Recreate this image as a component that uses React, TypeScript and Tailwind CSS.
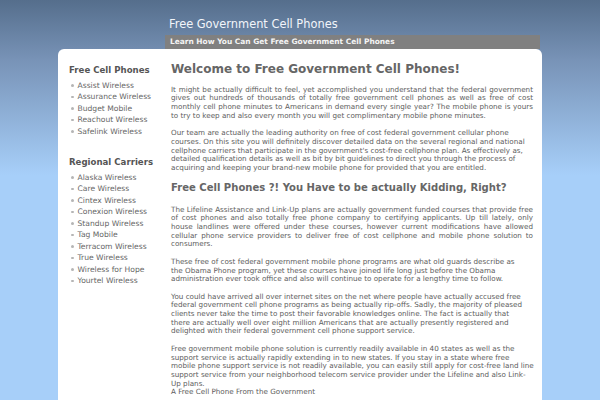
const freePhones = ['Assist Wireless', 'Assurance Wireless', 'Budget Mobile', 'Reachout Wireless', 'Safelink Wireless'];

const regional = [
  'Alaska Wireless',
  'Care Wireless',
  'Cintex Wireless',
  'Conexion Wireless',
  'Standup Wireless',
  'Tag Mobile',
  'Terracom Wireless',
  'True Wireless',
  'Wireless for Hope',
  'Yourtel Wireless',
];

const teamLines = [
  'Our team are actually the leading authority on free of cost federal government cellular phone',
  'courses. On this site you will definitely discover detailed data on the several regional and national',
  "cellphone carriers that participate in the government's cost-free cellphone plan. As effectively as,",
  'detailed qualification details as well as bit by bit guidelines to direct you through the process of',
  'acquiring and keeping your brand-new mobile phone for provided that you are entitled.',
];

const obamaLines = [
  'These free of cost federal government mobile phone programs are what old guards describe as',
  'the Obama Phone program, yet these courses have joined life long just before the Obama',
  'administration ever took office and also will continue to operate for a lengthy time to follow.',
];

const netLines = [
  'You could have arrived all over internet sites on the net where people have actually accused free',
  'federal government cell phone programs as being actually rip-offs. Sadly, the majority of pleased',
  'clients never take the time to post their favorable knowledges online. The fact is actually that',
  'there are actually well over eight million Americans that are actually presently registered and',
  'delighted with their federal government cell phone support service.',
];

const stateLines = [
  'Free government mobile phone solution is currently readily available in 40 states as well as the',
  'support service is actually rapidly extending in to new states. If you stay in a state where free',
  'mobile phone support service is not readily available, you can easily still apply for cost-free land line',
  'support service from your neighborhood telecom service provider under the Lifeline and also Link-',
  'Up plans.',
  'A Free Cell Phone From the Government',
];

function SideList({ title, items, first }: { title: string; items: string[]; first?: boolean }) {
  return (
    <div className={first ? 'pt-[16px]' : 'pt-[19.7px]'}>
      <h3 className="text-[8.6px] leading-[11px] font-bold text-[#555] mb-[3.8px]">{title}</h3>
      <ul>
        {items.map((item) => (
          <li key={item} className="flex items-center h-[11.5px] pl-[2px]">
            <span className="w-[2.5px] h-[2.5px] rounded-full bg-[#b5b5b5] mr-[4px] shrink-0" />
            <a href="#" className="text-[7.6px] text-[#666] whitespace-nowrap">
              {item}
            </a>
          </li>
        ))}
      </ul>
    </div>
  );
}

function Lines({ lines, last }: { lines: string[]; last?: boolean }) {
  return (
    <p className={last ? '' : 'mb-[8.7px]'}>
      {lines.map((line, i) => (
        <span key={i} className="block whitespace-nowrap">
          {line}
        </span>
      ))}
    </p>
  );
}

export default function App() {
  return (
    <div
      className="min-h-screen bg-[linear-gradient(to_bottom,#556e8c_0px,#7893b7_60px,#a7cff9_175px,#a7cff9_100%)] overflow-hidden"
      style={{ fontFamily: '"DejaVu Sans", Verdana, sans-serif' }}
    >
      <div className="w-[484px] mx-auto">
        {/* header */}
        <div className="pl-[107px] pr-[2px]">
          <div className="pt-[18px] h-[35px] pl-[4px]">
            <div className="text-[11.4px] leading-[13px] text-[#f2f5fa]">Free Government Cell Phones</div>
          </div>
          <div className="h-[14px] bg-[#808080] flex items-center pl-[5px]">
            <span className="text-[7.45px] font-bold text-[#f4f4f4]">Learn How You Can Get Free Government Cell Phones</span>
          </div>
        </div>

        {/* panel */}
        <div className="bg-white rounded-t-[6px] flex pl-[11px] pr-[9px] min-h-[360px]">
          <aside className="w-[102px] shrink-0">
            <SideList title="Free Cell Phones" items={freePhones} first />
            <SideList title="Regional Carriers" items={regional} />
          </aside>

          <main className="w-[362px] text-[7.2px] leading-[8.7px] text-[#5c5c5c]">
            <h1 className="pt-[13px] text-[12px] leading-[14px] font-bold text-[#666] mb-[9.6px]">
              Welcome to Free Government Cell Phones!
            </h1>
            <p className="text-justify mb-[8.7px]">
              It might be actually difficult to feel, yet accomplished you understand that the federal government gives out hundreds of
              thousands of totally free government cell phones as well as free of cost monthly cell phone minutes to Americans in demand
              every single year? The mobile phone is yours to try to keep and also every month you will get complimentary mobile phone
              minutes.
            </p>
            <Lines lines={teamLines} />
            <h2 className="mt-[1.7px] text-[10.05px] leading-[14px] font-bold text-[#666] mb-[10.3px] whitespace-nowrap">
              Free Cell Phones ?! You Have to be actually Kidding, Right?
            </h2>
            <p className="text-justify mb-[8.7px]">
              The Lifeline Assistance and Link-Up plans are actually government funded courses that provide free of cost phones and also
              totally free phone company to certifying applicants. Up till lately, only house landlines were offered under these courses,
              however current modifications have allowed cellular phone service providers to deliver free of cost cellphone and mobile
              phone solution to consumers.
            </p>
            <Lines lines={obamaLines} />
            <Lines lines={netLines} />
            <Lines lines={stateLines} last />
          </main>
        </div>
      </div>
    </div>
  );
}
